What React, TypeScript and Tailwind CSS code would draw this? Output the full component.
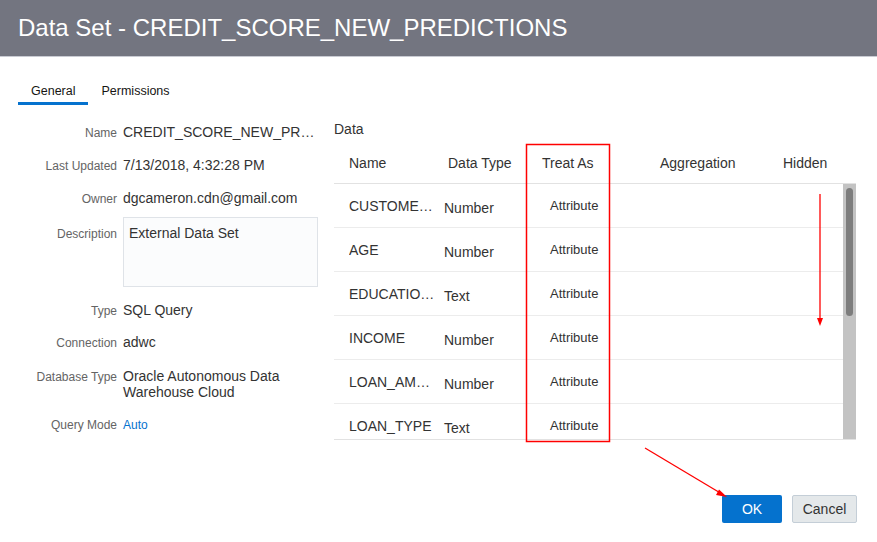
const info: { label: string; value: string; h: string; kind?: "desc" | "link" | "multi" }[] = [
  { label: "Name", value: "CREDIT_SCORE_NEW_PREDICTIONS", h: "h-[33px]" },
  { label: "Last Updated", value: "7/13/2018, 4:32:28 PM", h: "h-[33px]" },
  { label: "Owner", value: "dgcameron.cdn@gmail.com", h: "h-[28px]" },
  { label: "Description", value: "External Data Set", h: "h-[84px]", kind: "desc" },
  { label: "Type", value: "SQL Query", h: "h-[32px]" },
  { label: "Connection", value: "adwc", h: "h-[35px]" },
  { label: "Database Type", value: "Oracle Autonomous Data Warehouse Cloud", h: "h-[48px]", kind: "multi" },
  { label: "Query Mode", value: "Auto", h: "h-[30px]", kind: "link" },
];

// shown = the name as the grid cuts it
const rows = [
  { name: "CUSTOMER_ID", shown: "CUSTOMER_ID", type: "Number" },
  { name: "AGE", shown: "AGE", type: "Number" },
  { name: "EDUCATION", shown: "EDUCATIO…", type: "Text" },
  { name: "INCOME", shown: "INCOME", type: "Number" },
  { name: "LOAN_AMOUNT", shown: "LOAN_AMOUNT", type: "Number" },
  { name: "LOAN_TYPE", shown: "LOAN_TYPE", type: "Text" },
];

function InfoValue({ item }: { item: (typeof info)[number] }) {
  if (item.kind === "desc") {
    return (
      <div className="w-[195px] h-[70px] border border-[#dfe3e8] bg-[#fbfcfd] pl-[5px] pt-[6px] text-[14px] leading-[18px] text-[#333]">
        {item.value}
      </div>
    );
  }
  if (item.kind === "link") {
    return <div className="text-[12px] leading-[18px] text-[#0572ce]">{item.value}</div>;
  }
  if (item.kind === "multi") {
    return <div className="w-[195px] text-[14px] leading-[16px] text-[#333]">{item.value}</div>;
  }
  return <div className="w-[195px] truncate text-[14px] leading-[18px] text-[#333]">{item.value}</div>;
}

export default function App() {
  return (
    <div className="relative w-full h-[542px] overflow-hidden bg-white font-['Liberation_Sans',Arial,sans-serif]">
      <header className="h-[57px] bg-[#737580] border-b border-[#c9cbd3] pl-[18px] flex items-center">
        <h1 className="text-[24px] leading-[28px] text-white">Data Set - CREDIT_SCORE_NEW_PREDICTIONS</h1>
      </header>

      <div className="pl-[18px] pt-[25px] flex flex-row text-[12.5px] leading-[18px] text-[#161513]">
        <div className="px-[13px] pb-[2px] border-b-[3px] border-[#0572ce]">General</div>
        <div className="px-[13px] pb-[2px] border-b-[3px] border-transparent">Permissions</div>
      </div>

      <div className="flex flex-row pl-[18px] mt-[15px] gap-[16px]">
        <div className="w-[300px] pt-[3px] flex flex-col">
          {info.map((item) => (
            <div key={item.label} className={`flex flex-row items-baseline gap-[6px] ${item.h}`}>
              <div className="w-[99px] shrink-0 text-right text-[12px] leading-[18px] text-[#646464] whitespace-nowrap">
                {item.label}
              </div>
              <InfoValue item={item} />
            </div>
          ))}
        </div>

        <div className="w-[523px] flex flex-col">
          <div className="text-[14px] leading-[18px] text-[#333]">Data</div>
          <div className="mt-[6px] w-[522px] h-[40px] flex flex-row items-center border-b border-[#e2e2e2] text-[14px] text-[#333]">
            <div className="w-[106px] pl-[15px]">Name</div>
            <div className="w-[86px] pl-[8px]">Data Type</div>
            <div className="w-[114px] pl-[16px]">Treat As</div>
            <div className="w-[130px] pl-[20px]">Aggregation</div>
            <div className="pl-[13px]">Hidden</div>
          </div>
          <div className="w-[522px] h-[256px] flex flex-row border-b border-[#e2e2e2] overflow-hidden">
            <div className="w-[509px] flex flex-col">
              {rows.map((r) => (
                <div key={r.name} className="h-[44px] shrink-0 flex flex-row items-center border-b border-[#ececec] text-[#333]">
                  <div className="w-[106px] pl-[15px] pt-[2px]">
                    <div className="w-[88px] truncate text-[14px]" title={r.name}>{r.shown}</div>
                  </div>
                  <div className="w-[86px] pl-[4px] pt-[6px] text-[14px]">{r.type}</div>
                  <div className="w-[114px] pl-[24px] pt-[1px] text-[13px]">Attribute</div>
                </div>
              ))}
            </div>
            <div className="w-[13px] h-full bg-[#c3c3c3] pt-[4px] flex justify-center">
              <div className="w-[7px] h-[128px] rounded-full bg-[#7d7d7d]" />
            </div>
          </div>
          <div className="mt-[55px] flex flex-row justify-end gap-[10px] text-[14px]">
            <button className="w-[60px] h-[28px] rounded-[2px] bg-[#0572ce] text-white">OK</button>
            <button className="w-[65px] h-[28px] rounded-[2px] bg-[#e4e8ea] border border-[#c4ced7] text-[#333]">
              Cancel
            </button>
          </div>
        </div>
      </div>

      <svg className="absolute inset-0 pointer-events-none" width="877" height="542" viewBox="0 0 877 542">
        <rect x="526.5" y="144.5" width="83" height="297" fill="none" stroke="#ff0000" strokeWidth="1.5" />
        <line x1="820" y1="194" x2="820" y2="320" stroke="#ff0000" strokeWidth="1.3" />
        <polygon points="817,318 823,318 820,326" fill="#ff0000" />
        <line x1="645" y1="448" x2="722" y2="494" stroke="#ff0000" strokeWidth="1.3" />
        <polygon points="719,489.5 716,495 727,497" fill="#ff0000" />
      </svg>
    </div>
  );
}
